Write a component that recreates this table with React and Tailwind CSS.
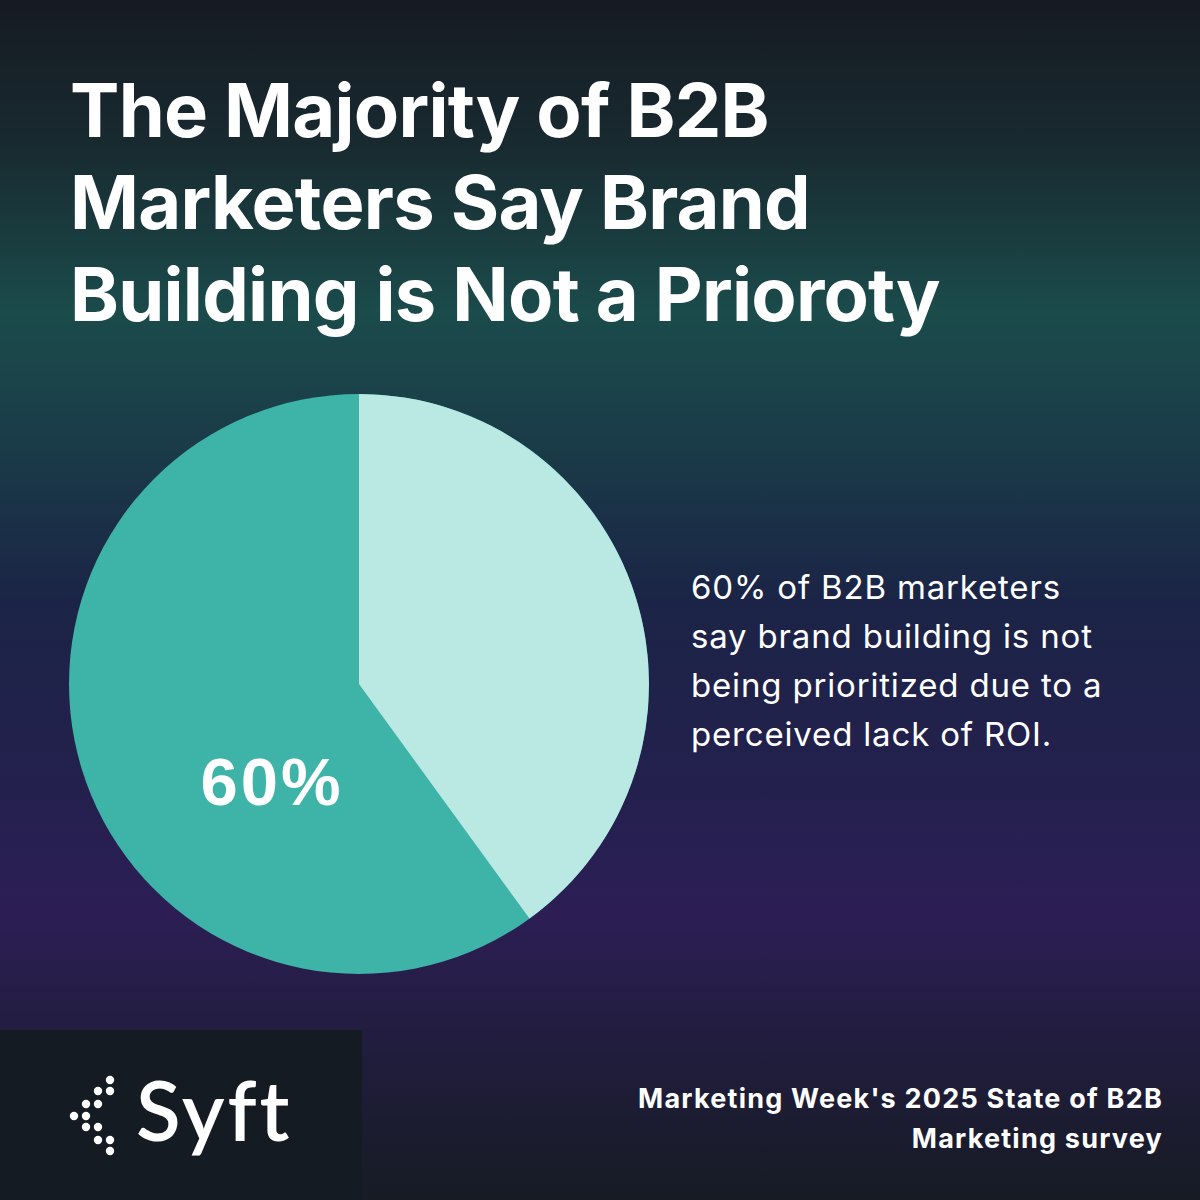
import React from 'react';

const pieSlices = [
  { value: 60, color: '#3eb3a8' },
  { value: 40, color: '#bae8e3' },
];

const bodyFont = { fontFamily: 'Inter, "Open Sans", sans-serif' };

const SyftMark = () => {
  // chevron of dots, two dots per row
  const dots = [
    [42, 8], [30, 19], [42, 19], [18, 32], [30, 32], [6, 44],
    [18, 44], [18, 55], [30, 55], [30, 68], [42, 68], [42, 79],
  ];
  return (
    <svg width="48" height="86" viewBox="0 0 48 86">
      {dots.map(([cx, cy], i) => (
        <circle key={i} cx={cx} cy={cy} r="4.2" fill="#ffffff" />
      ))}
    </svg>
  );
};

const Pie = () => {
  const r = 290;
  const share = pieSlices[1].value / 100;
  const angle = share * Math.PI * 2;
  const x = r + r * Math.sin(angle);
  const y = r - r * Math.cos(angle);
  return (
    <svg width="580" height="580" viewBox="0 0 580 580" className="shrink-0">
      <circle cx={r} cy={r} r={r} fill={pieSlices[0].color} />
      <path d={`M${r},${r} L${r},0 A${r},${r} 0 0 1 ${x},${y} Z`} fill={pieSlices[1].color} />
      <text
        x="203"
        y="411"
        textAnchor="middle"
        fill="#ffffff"
        fontSize="67"
        fontWeight="700"
        letterSpacing="3"
        fontFamily='"Liberation Sans", Arial, sans-serif'
      >
        60%
      </text>
    </svg>
  );
};

export default function App() {
  return (
    <div
      className="w-[1200px] h-[1200px] flex flex-col overflow-hidden text-white"
      style={bodyFont}
    >
      <div className="w-full h-full flex flex-col bg-[linear-gradient(180deg,#161a22_0%,#182a30_12%,#1b4b4b_26%,#1a3a48_38%,#1b2446_50%,#24204e_66%,#2c1e55_76%,#221d40_86%,#161b24_100%)]">
        <h1 className="pl-[70px] pt-[64px] text-[74px] leading-[92px] font-bold tracking-[-0.01em]">
          The Majority of B2B
          <br />
          Marketers Say Brand
          <br />
          Building is Not a Prioroty
        </h1>

        <div className="flex items-start mt-[54px] pl-[69px] gap-[42px]">
          <Pie />
          <p className="mt-[169px] text-[33px] leading-[49px] font-normal tracking-[0.025em] whitespace-nowrap">
            60% of B2B marketers
            <br />
            say brand building is not
            <br />
            being prioritized due to a
            <br />
            perceived lack of ROI.
          </p>
        </div>

        <div className="mt-auto flex items-stretch h-[170px]">
          <div className="w-[362px] shrink-0 bg-[#151b23] flex items-center pl-[68px] gap-[20px]">
            <SyftMark />
            <span
              className="text-[82px] leading-none font-semibold tracking-[3px] pb-[12px]"
              style={{ fontFamily: 'Lato, "Open Sans", sans-serif' }}
            >
              Syft
            </span>
          </div>
          <div className="flex-1 pr-[37px] pt-[49px] text-right text-[27px] leading-[40px] font-bold tracking-[0.045em] whitespace-nowrap">
            Marketing Week's 2025 State of B2B
            <br />
            Marketing survey
          </div>
        </div>
      </div>
    </div>
  );
}
